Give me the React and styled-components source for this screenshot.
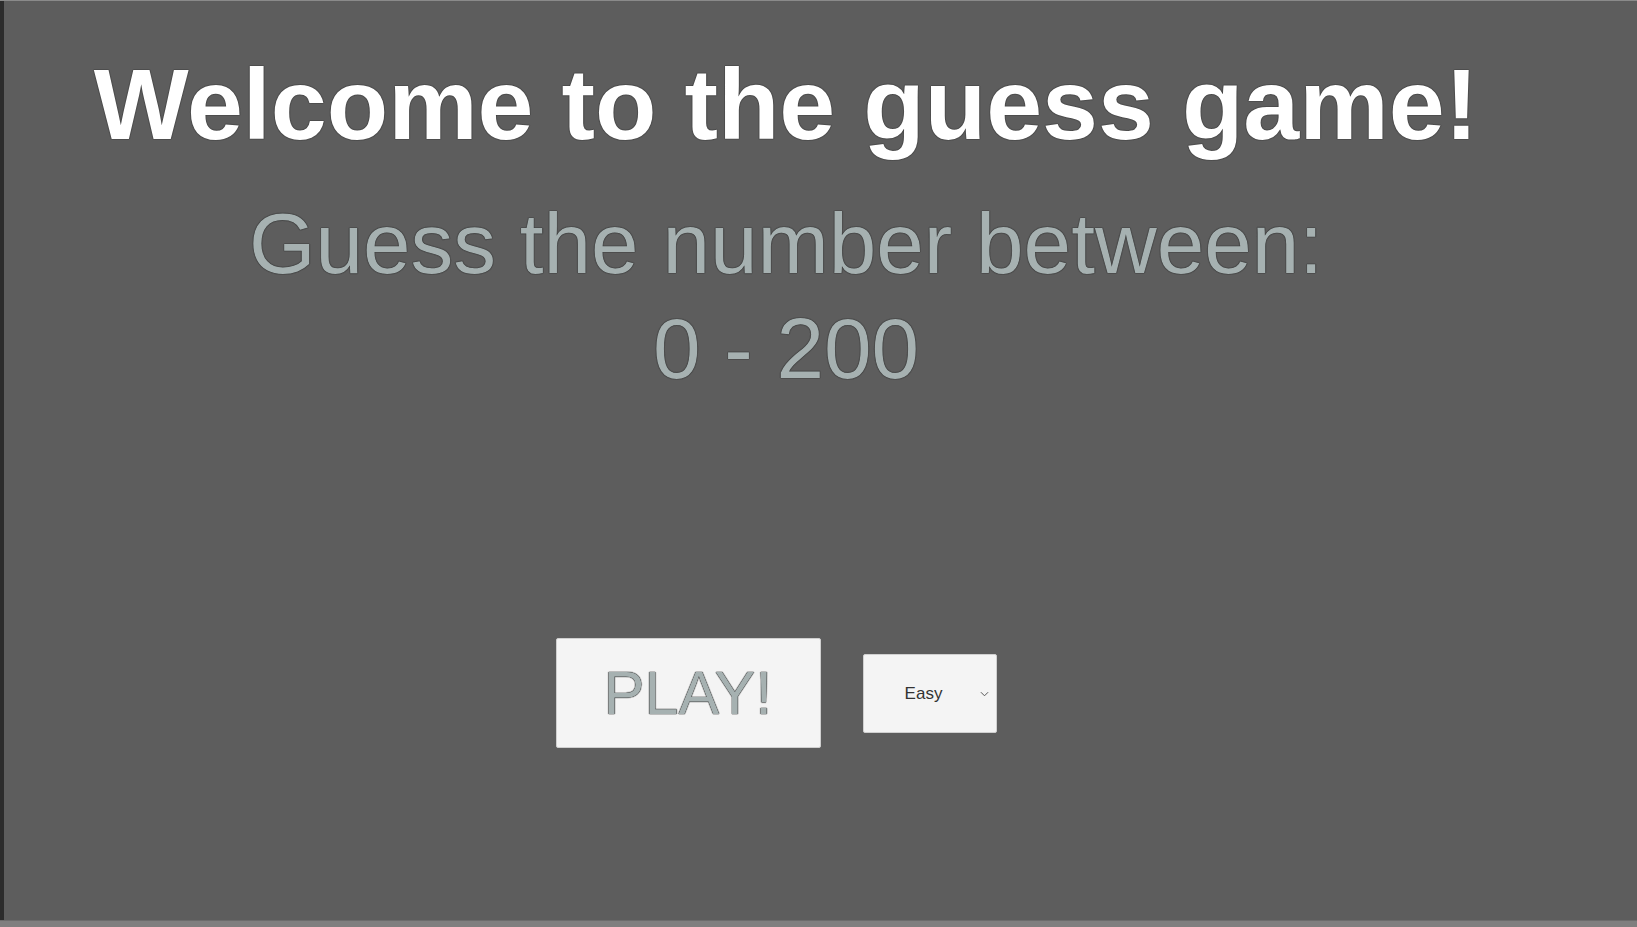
import React, { useState } from "react";
import styled, { createGlobalStyle } from "styled-components";

const GlobalStyle = createGlobalStyle`
  html, body {
    margin: 0;
    padding: 0;
    background: #5d5d5d;
    font-family: "Liberation Sans", Arial, sans-serif;
  }
  * {
    box-sizing: border-box;
  }
`;

const levels = ["Easy", "Medium", "Hard"];

export default function App() {
  const [level, setLevel] = useState("Easy");

  return (
    <>
      <GlobalStyle />
      <Screen>
        <Frame>
          <LeftEdge />
          <Main>
            <Title>Welcome to the guess game!</Title>
            <Subtitle>
              Guess the number between:
              <br />0 - 200
            </Subtitle>
            <Controls>
              <PlayButton>PLAY!</PlayButton>
              <SelectWrap>
                <LevelSelect value={level} onChange={(e) => setLevel(e.target.value)}>
                  {levels.map((l) => (
                    <option key={l} value={l}>
                      {l}
                    </option>
                  ))}
                </LevelSelect>
                <Chevron viewBox="0 0 10 6" aria-hidden="true">
                  <path d="M1 1l4 4 4-4" fill="none" stroke="#555" strokeWidth="1.1" />
                </Chevron>
              </SelectWrap>
            </Controls>
          </Main>
        </Frame>
        <BottomBar />
      </Screen>
    </>
  );
}

const outline = `
  text-shadow: 0 0 1px #2a2a2a, 0 0 1px #2a2a2a, 0 0 1px #2a2a2a;
`;

const Screen = styled.div`
  display: flex;
  flex-direction: column;
  width: 1637px;
  height: 927px;
  overflow: hidden;
`;

const Frame = styled.div`
  display: flex;
  flex: 1;
  border-top: 1px solid #8a8a8a;
  background: #5d5d5d;
`;

const LeftEdge = styled.div`
  width: 4px;
  background: #2c2c2c;
`;

const Main = styled.div`
  width: 1564px;
  display: flex;
  flex-direction: column;
  align-items: center;
  text-align: center;
  padding-top: 46px;
`;

const Title = styled.h1`
  margin: 0;
  font-size: 100.6px;
  font-weight: 700;
  color: #ffffff;
  white-space: nowrap;
  ${outline}
`;

const Subtitle = styled.h2`
  margin: 29px 0 0;
  font-size: 85.5px;
  line-height: 105px;
  font-weight: 400;
  color: #a6b1b1;
  white-space: nowrap;
  ${outline}
`;

const Controls = styled.div`
  display: flex;
  align-items: center;
  gap: 42px;
  margin-top: 237px;
  padding-right: 20px;
`;

const PlayButton = styled.button`
  width: 265px;
  height: 110px;
  border: 1px solid #cfcfcf;
  border-radius: 2px;
  background: #f4f4f4;
  color: #a6b1b1;
  font-family: "Liberation Sans", Arial, sans-serif;
  font-size: 61px;
  padding: 0;
  cursor: pointer;
  ${outline}
`;

const SelectWrap = styled.div`
  position: relative;
  width: 134px;
  height: 79px;
`;

const LevelSelect = styled.select`
  appearance: none;
  width: 100%;
  height: 100%;
  border: 1px solid #d0d0d0;
  border-radius: 2px;
  background: #f4f4f4;
  color: #333333;
  font-family: "Liberation Sans", Arial, sans-serif;
  font-size: 17px;
  padding: 0 32px 0 20px;
  text-align: center;
  text-align-last: center;
  outline: none;
`;

const Chevron = styled.svg`
  position: absolute;
  right: 8px;
  top: 37px;
  width: 9px;
  height: 6px;
  pointer-events: none;
`;

const BottomBar = styled.div`
  height: 7px;
  border-top: 1px solid #6c6c6c;
  background: #7f7f7f;
`;
